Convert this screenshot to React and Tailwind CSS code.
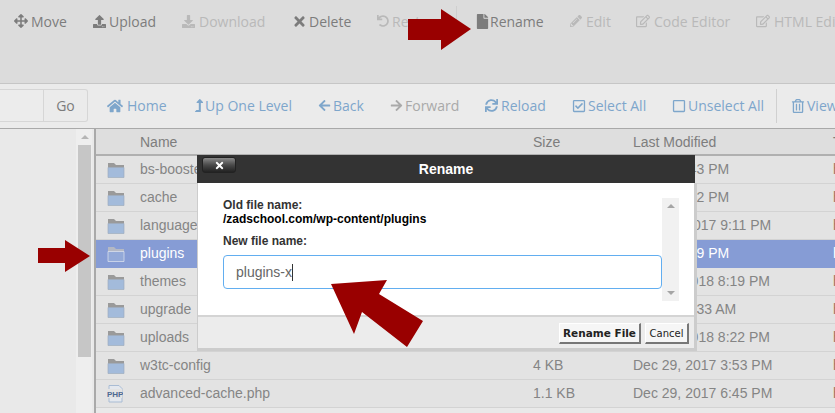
import React from "react";
import {
  FaArrowsAlt,
  FaArrowLeft,
  FaArrowRight,
  FaFile,
  FaHome,
  FaLevelUpAlt,
  FaPencilAlt,
  FaRegCheckSquare,
  FaRegEdit,
  FaRegSquare,
  FaRegTrashAlt,
  FaSync,
  FaTimes,
  FaUndo,
  FaUpload,
  FaDownload,
} from "react-icons/fa";

const TOP_ACTIONS = [
  { label: "Move", icon: <FaArrowsAlt />, width: "w-[79px]", iconBox: "w-[17px] text-[14px]", tone: "text-[#7c7c7c]" },
  { label: "Upload", icon: <FaUpload />, width: "w-[89px]", iconBox: "w-[16px] text-[13px]", tone: "text-[#7c7c7c]" },
  { label: "Download", icon: <FaDownload />, width: "w-[110px]", iconBox: "w-[17px] text-[13px]", tone: "text-[#b9b9b9]" },
  { label: "Delete", icon: <FaTimes />, width: "w-[85px]", iconBox: "w-[17px] text-[15px]", tone: "text-[#7c7c7c]" },
  { label: "Restore", icon: <FaUndo />, width: "w-[79px]", iconBox: "w-[15px] text-[12px]", tone: "text-[#b9b9b9]" },
];

const TOP_ACTIONS_RIGHT = [
  { label: "Rename", icon: <FaFile />, width: "w-[95px]", iconBox: "w-[15px] text-[15px]", tone: "text-[#7c7c7c]" },
  { label: "Edit", icon: <FaPencilAlt />, width: "w-[66px]", iconBox: "w-[16px] text-[12px]", tone: "text-[#b9b9b9]" },
  { label: "Code Editor", icon: <FaRegEdit />, width: "w-[120px]", iconBox: "w-[18px] text-[14px]", tone: "text-[#b9b9b9]" },
  { label: "HTML Editor", icon: <FaRegEdit />, width: "w-[110px]", iconBox: "w-[18px] text-[14px]", tone: "text-[#b9b9b9]" },
];

const NAV_ACTIONS = [
  { label: "Home", icon: <FaHome />, width: "w-[86px]", iconBox: "w-[20px] text-[16px]", tone: "text-[#7ea6cb]" },
  { label: "Up One Level", icon: <FaLevelUpAlt />, width: "w-[125px]", iconBox: "w-[12px] text-[13px]", tone: "text-[#7ea6cb]" },
  { label: "Back", icon: <FaArrowLeft />, width: "w-[72px]", iconBox: "w-[15px] text-[13px]", tone: "text-[#7ea6cb]" },
  { label: "Forward", icon: <FaArrowRight />, width: "w-[95px]", iconBox: "w-[15px] text-[13px]", tone: "text-[#a9a9a9]" },
  { label: "Reload", icon: <FaSync />, width: "w-[87px]", iconBox: "w-[16px] text-[13px]", tone: "text-[#7ea6cb]" },
  { label: "Select All", icon: <FaRegCheckSquare />, width: "w-[100px]", iconBox: "w-[16px] text-[14px]", tone: "text-[#7ea6cb]" },
  { label: "Unselect All", icon: <FaRegSquare />, width: "w-[104px]", iconBox: "w-[16px] text-[14px]", tone: "text-[#7ea6cb]" },
];

const ROWS = [
  { name: "bs-booster-cache", size: "4 KB", date: "Today, 3:43 PM" },
  { name: "cache", size: "4 KB", date: "Today, 3:42 PM" },
  { name: "languages", size: "4 KB", date: "Nov 29, 2017 9:11 PM" },
  { name: "plugins", size: "4 KB", date: "Today, 3:39 PM", selected: true },
  { name: "themes", size: "4 KB", date: "Jan 12, 2018 8:19 PM" },
  { name: "upgrade", size: "4 KB", date: "Today, 10:33 AM" },
  { name: "uploads", size: "4 KB", date: "Jan 12, 2018 8:22 PM" },
  { name: "w3tc-config", size: "4 KB", date: "Dec 29, 2017 3:53 PM" },
  { name: "advanced-cache.php", size: "1.1 KB", date: "Dec 29, 2017 6:45 PM", php: true },
];

const FolderIcon = ({ selected }) => (
  <svg width="18" height="16" viewBox="0 0 18 16">
    <path d="M1 1h6l2 2h8v4H1z" fill={selected ? "#b4b8c4" : "#9a9a9a"} />
    <path d="M1 5.5h16v10H1z" fill={selected ? "#93a9d8" : "#a3bbdb"} stroke={selected ? "#e2e6f0" : "#9fadbf"} strokeWidth="0.7" />
  </svg>
);

const PhpIcon = () => (
  <svg width="16" height="18" viewBox="0 0 16 18">
    <path d="M2 .5h10l3 3V17H2z" fill="#e4e8ee" stroke="#a9bcd4" />
    <rect x="0" y="4" width="15" height="9" fill="#e3e3e3" />
    <text x="0" y="12" fontSize="8" fontWeight="700" fontFamily="Liberation Sans, sans-serif" fill="#4d6a92">PHP</text>
  </svg>
);

const ActionItem = ({ item }) => (
  <div className={`flex items-center shrink-0 ${item.width} ${item.tone}`}>
    <span className={`flex items-center shrink-0 ${item.iconBox}`}>{item.icon}</span>
    <span className="whitespace-nowrap">{item.label}</span>
  </div>
);

const FileRow = ({ row }) => (
  <div
    className={`flex items-center h-[28px] shrink-0 border-b whitespace-nowrap ${
      row.selected
        ? "bg-[#869cd5] border-[#869cd5] text-white"
        : "bg-[#e3e3e3] border-[#d3d3d3] text-[#858585]"
    }`}
  >
    <div className="w-[44px] shrink-0 pl-[11px] flex items-center">
      {row.php ? <PhpIcon /> : <FolderIcon selected={row.selected} />}
    </div>
    <div className="w-[393px] shrink-0">{row.name}</div>
    <div className="w-[100px] shrink-0">{row.size}</div>
    <div className="w-[200px] shrink-0">{row.date}</div>
    <div className={row.selected ? "text-white" : "text-[#a9705f]"}>httpd</div>
  </div>
);

const RenameModal = () => (
  <div className="absolute left-[197px] top-[155px] w-[500px] h-[196px] flex flex-col font-['Liberation_Sans',sans-serif]">
    <div className="relative h-[28px] shrink-0 bg-[#333333] flex items-center justify-center text-white font-bold text-[14px] w-[498px]">
      Rename
      <div className="absolute left-[5px] top-[2px] w-[34px] h-[16px] rounded-[3px] bg-gradient-to-b from-[#8a8a8a] via-[#4a4a4a] to-[#222222] border border-[#222] flex items-center justify-center text-[11px]">
        <FaTimes />
      </div>
    </div>
    <div className="flex flex-col flex-1 border-r-[3px] border-b-[3px] border-l-[1px] border-[#cccccc]">
      <div className="relative h-[134px] shrink-0 bg-white border-b-2 border-[#d4d4d4] pl-[25px] pt-[15px] text-[12px] leading-[14px] text-[#222]">
        <div className="font-bold text-[#333]">Old file name:</div>
        <div className="font-bold text-black">/zadschool.com/wp-content/plugins</div>
        <div className="font-bold text-[#333] mt-[8px]">New file name:</div>
        <div className="mt-[7px] w-[439px] h-[34px] rounded-[4px] border border-[#62aef0] flex items-center pl-[12px] text-[14px] text-[#666]">
          plugins-x
          <span className="w-px h-[17px] bg-[#333]" />
        </div>
        <div className="absolute left-[464px] top-[15px] w-[17px] h-[103px] bg-[#f1f1f1] flex flex-col items-center justify-between py-[6px]">
          <span className="w-0 h-0 border-x-[4px] border-x-transparent border-b-[4px] border-b-[#a5a5a5]" />
          <span className="w-0 h-0 border-x-[4px] border-x-transparent border-t-[4px] border-t-[#a5a5a5]" />
        </div>
      </div>
      <div className="flex-1 bg-[#ececec] flex justify-end items-start pt-[6px] pr-[5px] gap-[4px] font-['DejaVu_Sans',sans-serif] text-[10px] text-[#222]">
        <div className="w-[82px] h-[21px] pt-[2px] flex items-center justify-center font-bold text-[10.5px] bg-[#f6f6f6] border-r-2 border-b-2 border-[#777] border-t border-l border-t-white border-l-white">
          Rename File
        </div>
        <div className="w-[44px] h-[21px] pt-px flex items-center justify-center bg-[#f6f6f6] border-r-2 border-b-2 border-[#777] border-t border-l border-t-white border-l-white">
          Cancel
        </div>
      </div>
    </div>
  </div>
);

const Arrows = () => (
  <svg className="absolute inset-0 pointer-events-none" width="835" height="413" viewBox="0 0 835 413">
    <path d="M408 19h33V9l30 20-30 21V40h-33z" fill="#990000" />
    <path d="M38 248h27v-8l25 16-25 16v-9H38z" fill="#990000" />
    <path d="M331 284l56-4-8 14 44 27-16 26-45-35-8 22z" fill="#990000" />
  </svg>
);

export default function App() {
  return (
    <div className="relative w-[835px] h-[413px] overflow-hidden flex flex-col bg-[#e9e9e9] text-[14px] font-['Open_Sans',sans-serif]">
      {/* top actions */}
      <div className="h-[84px] shrink-0 bg-[#dcdcdc] border-b border-[#c6c6c6] pl-[14px] pt-[11px]">
        <div className="flex items-center h-[20px]">
          {TOP_ACTIONS.map((item) => (
            <ActionItem key={item.label} item={item} />
          ))}
          <div className="w-px h-[30px] bg-[#cfcfcf] shrink-0 mr-[18px]" />
          {TOP_ACTIONS_RIGHT.map((item) => (
            <ActionItem key={item.label} item={item} />
          ))}
        </div>
      </div>

      {/* path bar and nav */}
      <div className="h-[45px] shrink-0 pb-px bg-[#ebebeb] border-b border-[#a9a9a9] flex items-center">
        <div className="w-[44px] h-[33px] shrink-0 border-y border-r border-[#d6d6d6] bg-[#ececec]" />
        <div className="w-[44px] h-[33px] shrink-0 border-y border-r border-[#d6d6d6] rounded-r-[3px] flex items-center justify-center text-[#7c7c7c]">
          Go
        </div>
        <div className="w-[19px] shrink-0" />
        {NAV_ACTIONS.map((item) => (
          <ActionItem key={item.label} item={item} />
        ))}
        <div className="w-px h-[34px] bg-[#d0d0d0] shrink-0 mr-[14px]" />
        <ActionItem item={{ label: "View Trash", icon: <FaRegTrashAlt />, width: "w-[90px]", iconBox: "w-[16px] text-[14px]", tone: "text-[#7ea6cb]" }} />
      </div>

      <div className="flex flex-1 min-h-0">
        {/* tree pane */}
        <div className="w-[94px] shrink-0 flex justify-end pr-[2px]">
          <div className="w-[16px] bg-[#eeeeee] pl-[2px] flex flex-col">
            <div className="h-[16px] shrink-0 flex items-center justify-center">
              <span className="w-0 h-0 border-x-[4px] border-x-transparent border-b-[4px] border-b-[#b5b5b5]" />
            </div>
            <div className="w-[13px] h-[212px] bg-[#c6c6c6]" />
          </div>
        </div>

        {/* file list */}
        <div className="flex-1 min-w-0 border-l-2 border-[#a9a9a9] font-['Liberation_Sans',sans-serif] overflow-hidden">
          <div className="flex items-center h-[27px] pt-[2px] bg-[#dedede] border-b-2 border-[#b0b0b0] text-[#7d7d7d] whitespace-nowrap">
            <div className="w-[44px] shrink-0" />
            <div className="w-[393px] shrink-0">Name</div>
            <div className="w-[100px] shrink-0">Size</div>
            <div className="w-[200px] shrink-0">Last Modified</div>
            <div>Type</div>
          </div>
          {ROWS.map((row) => (
            <FileRow key={row.name} row={row} />
          ))}
        </div>
      </div>

      <RenameModal />
      <Arrows />
    </div>
  );
}
